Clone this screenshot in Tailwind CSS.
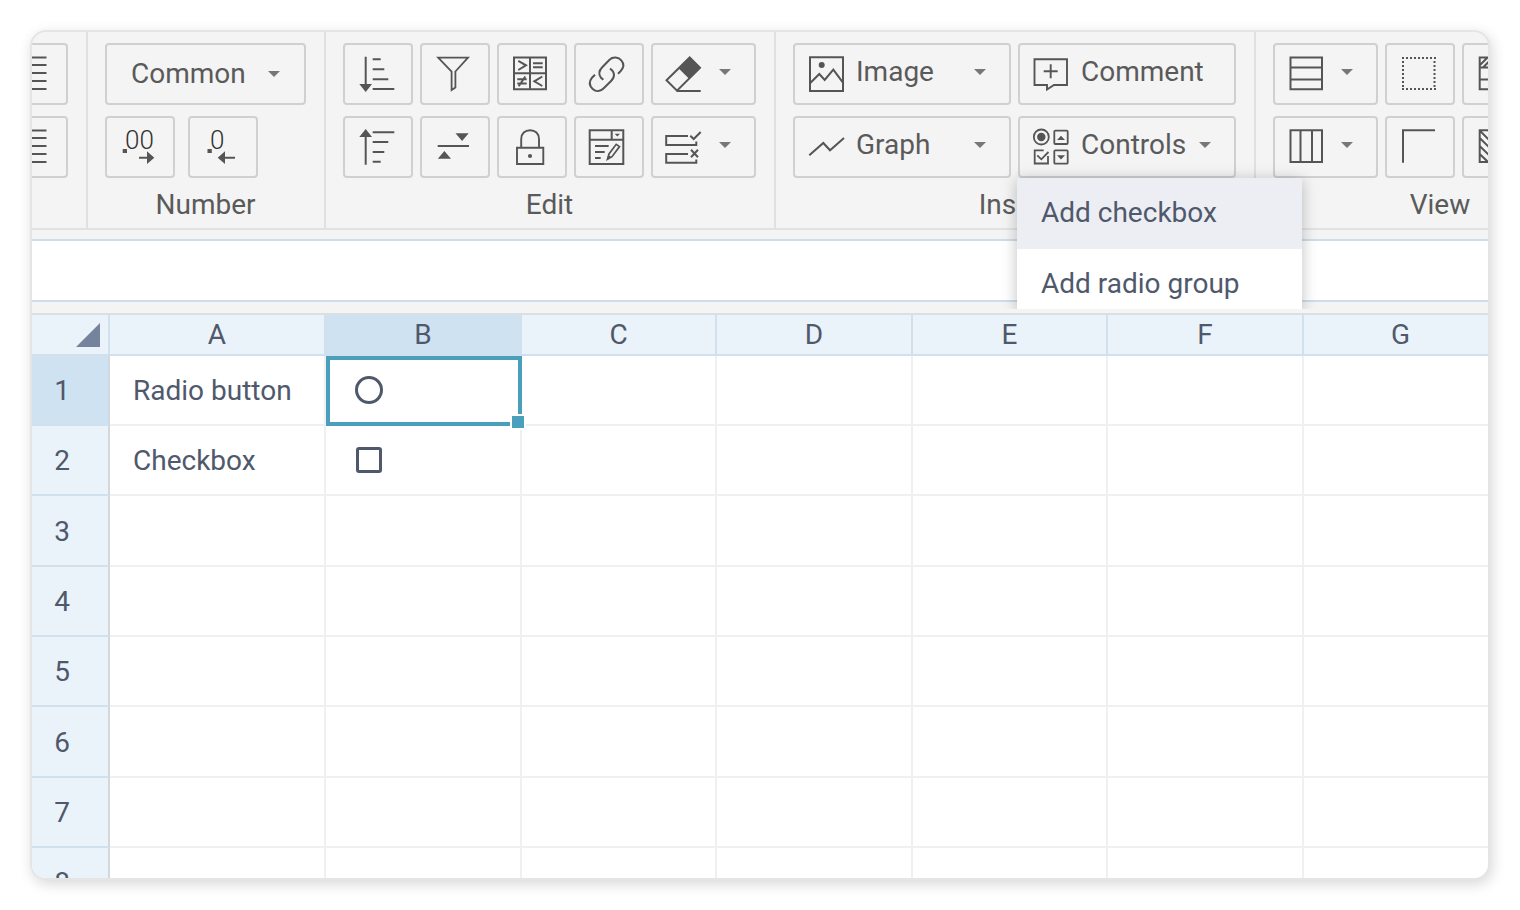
<!DOCTYPE html>
<html lang="en">
<head>
<meta charset="utf-8">
<meta name="viewport" content="width=device-width, initial-scale=1">
<title>Spreadsheet</title>
<script src="https://cdn.jsdelivr.net/npm/@tailwindcss/browser@4"></script>
</head>
<body class="bg-white font-[Roboto,sans-serif] text-[28px] leading-8 text-[#5a5a5a]">
<svg class="hidden" aria-hidden="true">
  <symbol id="caret" viewBox="0 0 12 6"><path d="M0 0H12L6 6Z" fill="#777"/></symbol>
</svg>
<div class="h-screen p-[30px]">
<main class="flex h-full flex-col overflow-hidden rounded-2xl border-2 border-[#e5e5e5] bg-[#f4f4f4] shadow-[2px_4px_14px_rgba(0,0,0,0.16)]">

  <div role="toolbar" aria-label="Spreadsheet tools" class="relative z-10 flex shrink-0 border-b-2 border-[#e2e2e2] [&_svg]:shrink-0 [&_svg]:overflow-visible [&_button]:shrink-0">

    <!-- Alignment -->
    <section class="flex w-14 shrink-0 flex-col items-end gap-[11px] border-r-2 border-[#e0e0e0] pt-[11px] pr-[18px]">
      <button aria-label="Align" class="flex h-[62px] w-[70px] items-center justify-center rounded border-2 border-[#d0d0d0]">
        <svg class="size-9" viewBox="0 0 36 36" fill="none" stroke="#555" stroke-width="2"><path d="M3 1.5H31.5M3 9H31.5M3 17H31.5M3 25H31.5M3 33H31.5"/></svg>
      </button>
      <button aria-label="Justify" class="flex h-[62px] w-[70px] items-center justify-center rounded border-2 border-[#d0d0d0]">
        <svg class="size-9" viewBox="0 0 36 36" fill="none" stroke="#555" stroke-width="2"><path d="M3 1.5H31.5M3 9H31.5M3 17H31.5M3 25H31.5M3 33H31.5"/></svg>
      </button>
    </section>

    <!-- Number -->
    <section class="flex shrink-0 flex-col border-r-2 border-[#e0e0e0] pt-[11px] pr-[18px] pl-[17px]">
      <div class="flex flex-col gap-[11px]">
        <div class="relative h-[62px] w-[201px]">
          <select aria-label="Number format" class="h-full w-full appearance-none rounded border-2 border-[#d0d0d0] bg-transparent pl-6"><option>Common</option></select>
          <svg class="pointer-events-none absolute top-[28px] right-[26px] h-[6px] w-3"><use href="#caret"/></svg>
        </div>
        <div class="flex gap-[13px]">
          <button aria-label="Increase decimals" class="flex h-[62px] w-[70px] items-center justify-center rounded border-2 border-[#d0d0d0]">
            <svg class="size-9" viewBox="0 0 36 36"><path d="M.7 20H5V24H.7ZM17 27.7H25V22.3L32.3 28.7L25 35V29.7H17Z" fill="#555"/><text x="3" y="20" font-size="26" font-weight="300" fill="#333">00</text></svg>
          </button>
          <button aria-label="Decrease decimals" class="flex h-[62px] w-[70px] items-center justify-center rounded border-2 border-[#d0d0d0]">
            <svg class="size-9" viewBox="0 0 36 36"><path d="M2.5 20H6.8V24H2.5ZM30 27.7H20V22.3L12.7 28.7L20 35V29.7H30Z" fill="#555"/><text x="5" y="20" font-size="26" font-weight="300" fill="#333">0</text></svg>
          </button>
        </div>
      </div>
      <h2 class="flex h-[50px] items-center justify-center pt-[3px]">Number</h2>
    </section>

    <!-- Edit -->
    <section class="flex shrink-0 flex-col border-r-2 border-[#e0e0e0] pt-[11px] pr-[18px] pl-[17px]">
      <div class="grid grid-cols-[70px_70px_70px_70px_105px] gap-x-[7px] gap-y-[11px]">
        <button aria-label="Sort descending" class="flex h-[62px] items-center justify-center rounded border-2 border-[#d0d0d0]">
          <svg class="size-9" viewBox="0 0 36 36" fill="none" stroke="#555" stroke-width="2"><path d="M5.7 .7V29M12.7 3.3H20.7M12.7 13.3H24.3M12.7 23.3H28.3M12.7 33H34.3"/><path d="M-.7 28H12L5.7 36Z" fill="#555" stroke="none"/></svg>
        </button>
        <button aria-label="Filter" class="flex h-[62px] items-center justify-center rounded border-2 border-[#d0d0d0]">
          <svg class="size-9" viewBox="0 0 36 36" fill="none" stroke="#555" stroke-width="1.8"><path d="M1.2 1.7H31L18.4 15.5V31.5L14.6 34V15.5Z"/></svg>
        </button>
        <button aria-label="Conditional format" class="flex h-[62px] items-center justify-center rounded border-2 border-[#d0d0d0]">
          <svg class="size-9" viewBox="0 0 36 36" fill="none" stroke="#555" stroke-width="2"><path d="M0 1.5H32V33.3H0ZM16 1.5V33.3M0 17.3H32" /><path d="M4.3 4.8L12 9.3L4.3 14M19 7.3H28.7M19 11.3H28.7M3.3 23.3H12.7M3.3 27.5H12.7M11.3 20.5L4.7 30.3M28.3 20.5L20.3 25.3L28.3 30"/></svg>
        </button>
        <button aria-label="Insert link" class="flex h-[62px] items-center justify-center rounded border-2 border-[#d0d0d0]">
          <svg class="size-9" viewBox="0 0 36 36" fill="none" stroke="#555" stroke-width="2"><path d="M27 17.7L29.5 15.2C32.5 12 33.3 8 30.5 4.7C27.5 .8 22 .5 18.5 3.7L11 11.5C8 14.7 7.7 18.5 9.8 21.5L12.3 23.8"/><path d="M19 12.5C23.8 16 24.3 20.7 20.3 24.7L13 32C9.5 35.7 5 36 1.7 33C-1.7 29.8-2 25.5 1 21.7L4 18.7"/></svg>
        </button>
        <button aria-label="Clear" class="flex h-[62px] items-center gap-4 rounded border-2 border-[#d0d0d0] pl-[14px]">
          <svg class="size-9" viewBox="0 0 36 36" fill="none" stroke="#555" stroke-width="2"><path d="M22.7 1.5L33 11.7L10 34.7L-.5 24.3Z"/><path d="M22.7 .7L33.7 11.7L22.3 23L11.5 12.2Z" fill="#555" stroke="none"/><path d="M9.7 35H33.7"/></svg>
          <svg class="mb-1 h-[6px] w-3"><use href="#caret"/></svg>
        </button>

        <button aria-label="Sort ascending" class="flex h-[62px] items-center justify-center rounded border-2 border-[#d0d0d0]">
          <svg class="size-9" viewBox="0 0 36 36" fill="none" stroke="#555" stroke-width="2"><path d="M5.7 7V35.7M12.7 3.3H34.3M12.7 13H28.3M12.7 23H24.3M12.7 32.7H20.7"/><path d="M-.7 8H12L5.7 0Z" fill="#555" stroke="none"/></svg>
        </button>
        <button aria-label="Freeze" class="flex h-[62px] items-center justify-center rounded border-2 border-[#d0d0d0]">
          <svg class="size-9" viewBox="0 0 36 36" fill="#555"><path d="M.7 16H32V18H.7ZM18.5 4.3H31.7L25.1 12ZM.8 29.7H14L7.4 22Z"/></svg>
        </button>
        <button aria-label="Lock" class="flex h-[62px] items-center justify-center rounded border-2 border-[#d0d0d0]">
          <svg class="size-9" viewBox="0 0 36 36" fill="none" stroke="#555" stroke-width="1.9"><path d="M3 18.7H29.3V35H3ZM7.2 18.7V10C7.2 4.5 11 1.2 16.1 1.2S25 4.5 25 10V18.7"/><circle cx="16" cy="27" r="2.1" fill="#555" stroke="none"/></svg>
        </button>
        <button aria-label="Data validation" class="flex h-[62px] items-center justify-center rounded border-2 border-[#d0d0d0]">
          <svg class="size-9" viewBox="0 0 36 36" fill="none" stroke="#555" stroke-width="2"><path d="M-1.3 1.2H32.3V35H-1.3ZM-1.3 10.7H32.3M20.7 1.2V10.7M4 17H17.7M4 23H13.7M4 29H9.7"/><path d="M16.5 30.3L18 25L25.2 15.3L28.5 17.6L21 27.7Z" stroke-width="1.7"/><path d="M15.7 31.3L17.3 26L20.7 28.3ZM23.7 4.7H29L26.3 7.6Z" fill="#555" stroke="none"/></svg>
        </button>
        <button aria-label="Validation rules" class="flex h-[62px] items-center gap-4 rounded border-2 border-[#d0d0d0] pl-[14px]">
          <svg class="size-9" viewBox="0 0 36 36" fill="none" stroke="#555" stroke-width="2"><path d="M21 7H-.8V16H29.3V12.5M21 25H-.8V33.7H29.3V30.5M23.3 6.8L26.7 10L33.7 3M24 20.8L31 28.3M31 20.8L24 28.3"/></svg>
          <svg class="mb-1 h-[6px] w-3"><use href="#caret"/></svg>
        </button>
      </div>
      <h2 class="flex h-[50px] items-center justify-center pt-[3px]">Edit</h2>
    </section>

    <!-- Insert -->
    <section class="flex shrink-0 flex-col border-r-2 border-[#e0e0e0] pt-[11px] pr-[18px] pl-[17px]">
      <div class="grid grid-cols-[218px_218px] gap-x-[7px] gap-y-[11px]">
        <button class="flex h-[62px] items-center rounded border-2 border-[#d0d0d0] pr-[23px] pl-[13px]">
          <svg class="size-9" viewBox="0 0 36 36" fill="none" stroke="#555" stroke-width="2"><path d="M2 1.3H35V35H2Z"/><path d="M2 27.3L11.3 18L16.7 24L25.3 13.7L35 26.7"/><circle cx="13.7" cy="9" r="3" fill="#555" stroke="none"/></svg>
          <span class="mb-1 ml-3">Image</span>
          <svg class="mb-1 ml-auto h-[6px] w-3"><use href="#caret"/></svg>
        </button>
        <button class="flex h-[62px] items-center rounded border-2 border-[#d0d0d0] pr-[23px] pl-[13px]">
          <svg class="size-9" viewBox="0 0 36 36" fill="none" stroke="#555" stroke-width="1.9"><path d="M1.5 3.3H34V29H21L14 33.5V29H1.5ZM17.7 8.3V22.3M10.7 15.3H24.7"/></svg>
          <span class="mb-1 ml-3">Comment</span>
        </button>
        <button class="flex h-[62px] items-center rounded border-2 border-[#d0d0d0] pr-[23px] pl-[13px]">
          <svg class="size-9" viewBox="0 0 36 36" fill="none" stroke="#555" stroke-width="2"><path d="M1.3 26.3L15.3 14L22 21.3L36 9"/></svg>
          <span class="mb-1 ml-3">Graph</span>
          <svg class="mb-1 ml-auto h-[6px] w-3"><use href="#caret"/></svg>
        </button>
        <div class="relative">
          <button aria-haspopup="menu" aria-expanded="true" class="flex h-[62px] w-full items-center rounded border-2 border-[#d0d0d0] pr-[23px] pl-[13px]">
            <svg class="size-9" viewBox="0 0 36 36" fill="none" stroke="#555" stroke-width="1.8"><circle cx="8.3" cy="8" r="7.5"/><circle cx="8.3" cy="8" r="4.2" fill="#555" stroke="none"/><rect x="21.3" y="1.6" width="13.4" height="13.4" rx="1"/><path d="M10.7 21.3H1.7V34.5H15V27M4.3 26.3L8.3 30.3L15.5 23"/><rect x="21.3" y="21.3" width="13.4" height="13.4" rx="1"/><path d="M24 11H32L28 6.7ZM24 26.3H32L28 30.6Z" fill="#555" stroke="none"/></svg>
            <span class="mb-1 ml-3">Controls</span>
            <svg class="mb-1 ml-auto h-[6px] w-3"><use href="#caret"/></svg>
          </button>
          <div class="absolute top-[62px] -left-px w-[285px] [clip-path:inset(-20px_-20px_0_-20px)]">
            <div role="menu" class="h-[131px] overflow-hidden bg-white text-[#4f596b] shadow-[0_2px_14px_rgba(0,0,0,0.25)]">
              <button role="menuitem" class="flex h-[71px] w-full items-center bg-[#edeef4] px-6 pb-px">Add checkbox</button>
              <button role="menuitem" class="flex h-[71px] w-full items-center px-6 pb-px">Add radio group</button>
            </div>
          </div>
        </div>
      </div>
      <h2 class="flex h-[50px] items-center justify-center pt-[3px]">Insert</h2>
    </section>

    <!-- View -->
    <section class="flex w-[368px] shrink-0 flex-col pt-[11px] pl-[17px]">
      <div class="grid grid-cols-[105px_70px_70px] gap-x-[7px] gap-y-[11px]">
        <button aria-label="Rows" class="flex h-[62px] items-center gap-4 rounded border-2 border-[#d0d0d0] pl-[14px]">
          <svg class="size-9" viewBox="0 0 36 36" fill="none" stroke="#555" stroke-width="2"><path d="M1.5 1.5H33V33.3H1.5ZM1.5 11.5H33M1.5 23.5H33"/></svg>
          <svg class="mb-1 h-[6px] w-3"><use href="#caret"/></svg>
        </button>
        <button aria-label="No borders" class="flex h-[62px] items-center justify-center rounded border-2 border-[#d0d0d0]">
          <svg class="size-9" viewBox="0 0 36 36" fill="none" stroke="#555" stroke-width="2" stroke-dasharray="2 2"><path d="M0 2H34M0 33H34M1 5V31M32.5 5V31"/></svg>
        </button>
        <button aria-label="Header row style" class="flex h-[62px] items-center justify-center rounded border-2 border-[#d0d0d0]">
          <svg class="size-9" viewBox="0 0 36 36" fill="none" stroke="#555" stroke-width="2"><path d="M.7 1.5H33V33.3H.7ZM.7 11.5H33M.7 23.5H33M1 9L8.5 1.5M4 11.5L14 1.5M12 11.5L22 1.5M20 11.5L30 1.5"/></svg>
        </button>
        <button aria-label="Columns" class="flex h-[62px] items-center gap-4 rounded border-2 border-[#d0d0d0] pl-[14px]">
          <svg class="size-9" viewBox="0 0 36 36" fill="none" stroke="#555" stroke-width="2"><path d="M1.5 1.3H33V33H1.5ZM11.5 1.3V33M23 1.3V33"/></svg>
          <svg class="mb-1 h-[6px] w-3"><use href="#caret"/></svg>
        </button>
        <button aria-label="Corner border" class="flex h-[62px] items-center justify-center rounded border-2 border-[#d0d0d0]">
          <svg class="size-9" viewBox="0 0 36 36" fill="none" stroke="#555" stroke-width="2"><path d="M1 33.7V1.2H33"/></svg>
        </button>
        <button aria-label="Fill pattern" class="flex h-[62px] items-center justify-center rounded border-2 border-[#d0d0d0]">
          <svg class="size-9" viewBox="0 0 36 36" fill="none" stroke="#555" stroke-width="2"><path d="M.7 1.3H33V33H.7ZM.7 1.5L32 33M.7 9L25 33M.7 17L17 33M.7 25L9 33M9 1.3L33 25M17 1.3L33 17"/></svg>
        </button>
      </div>
      <h2 class="flex h-[50px] items-center justify-center pt-[3px] pr-[17px]">View</h2>
    </section>
  </div>

  <!-- Formula bar -->
  <input type="text" aria-label="Formula" class="mt-[9px] mb-[11px] h-[63px] w-full shrink-0 border-y-2 border-[#cfdcea] bg-white px-6 outline-none">

  <!-- Grid -->
  <div class="min-h-0 flex-1 overflow-hidden border-t-2 border-[#dadfe2] bg-white text-[#4f596b]">
    <table class="w-[1467px] table-fixed border-separate border-spacing-0 [&_th]:border-r-2 [&_th]:border-b-2 [&_th]:p-0 [&_th]:font-normal [&_thead_th]:h-[41px] [&_thead_th]:border-[#d0e0ed] [&_tbody_th]:h-[70px] [&_tbody_th]:border-r-[#d3d8dd] [&_tbody_th]:border-b-[#d0e0ed] [&_tbody_th]:bg-[#ebf3fa] [&_tbody_th]:pt-[2px] [&_tbody_th]:pr-4 [&_tbody_tr:nth-child(3n)_th]:h-[71px] [&_td]:border-r-2 [&_td]:border-b-2 [&_td]:border-[#eff0f1] [&_td]:py-0 [&_td]:pr-6 [&_td]:pl-[23px]">
      <colgroup>
        <col class="w-[78px]"><col class="w-[216px]"><col class="w-[196px]"><col class="w-[195px]"><col class="w-[196px]"><col class="w-[195px]"><col class="w-[196px]"><col class="w-[195px]">
      </colgroup>
      <thead>
        <tr class="bg-[#ebf3fa]">
          <th aria-label="Select all"><svg class="mr-2 ml-auto size-6" viewBox="0 0 24 24"><path d="M24 0V24H0Z" fill="#75839c"/></svg></th>
          <th scope="col">A</th><th scope="col" class="bg-[#cfe2f2]">B</th><th scope="col">C</th><th scope="col">D</th><th scope="col">E</th><th scope="col">F</th><th scope="col">G</th>
        </tr>
      </thead>
      <tbody>
        <tr>
          <th scope="row" class="bg-[#cfe2f2]!">1</th>
          <td><label for="radio-b1" class="block pt-[2px]">Radio button</label></td>
          <td class="relative">
            <input id="radio-b1" type="radio" class="ml-[6px] block size-7 appearance-none rounded-full border-3 border-[#4f596b]">
            <div class="pointer-events-none absolute top-0 left-0 h-[70px] w-[196px] border-4 border-[#4a9fbd]"></div>
            <div class="absolute top-[58px] left-[184px] size-4 border-2 border-white bg-[#4a9fbd]"></div>
          </td>
          <td></td><td></td><td></td><td></td><td></td>
        </tr>
        <tr>
          <th scope="row">2</th>
          <td><label for="check-b2" class="block pt-[2px]">Checkbox</label></td>
          <td><input id="check-b2" type="checkbox" class="ml-[7px] block size-[26px] appearance-none rounded-[3px] border-3 border-[#4f596b]"></td>
          <td></td><td></td><td></td><td></td><td></td>
        </tr>
        <tr><th scope="row">3</th><td></td><td></td><td></td><td></td><td></td><td></td><td></td></tr>
        <tr><th scope="row">4</th><td></td><td></td><td></td><td></td><td></td><td></td><td></td></tr>
        <tr><th scope="row">5</th><td></td><td></td><td></td><td></td><td></td><td></td><td></td></tr>
        <tr><th scope="row">6</th><td></td><td></td><td></td><td></td><td></td><td></td><td></td></tr>
        <tr><th scope="row">7</th><td></td><td></td><td></td><td></td><td></td><td></td><td></td></tr>
        <tr><th scope="row">8</th><td></td><td></td><td></td><td></td><td></td><td></td><td></td></tr>
      </tbody>
    </table>
  </div>
</main>
</div>
</body>
</html>
